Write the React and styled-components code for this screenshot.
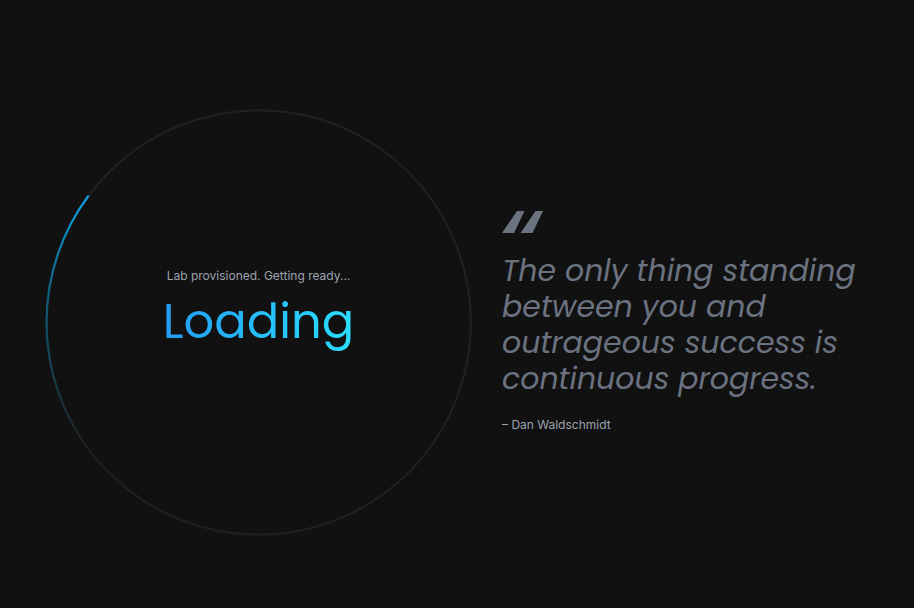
import React from "react";
import styled, { createGlobalStyle } from "styled-components";

const GlobalStyle = createGlobalStyle`
  * { box-sizing: border-box; }
  body {
    margin: 0;
    background: #111111;
    font-family: Inter, "Liberation Sans", sans-serif;
  }
`;

const Page = styled.main`
  display: grid;
  grid-template-columns: minmax(0, 7fr) minmax(0, 6fr);
  align-items: center;
  gap: 30px;
  min-height: 100vh;
  padding: 36px 46px 0 45px;
`;

const Loader = styled.section`
  display: grid;
  place-items: center;
  aspect-ratio: 1;

  > * { grid-area: 1 / 1; }
`;

const Ring = styled.svg`
  display: block;
  width: 100%;
  height: 100%;
  overflow: visible;
`;

const Status = styled.div`
  display: flex;
  flex-direction: column;
  align-items: center;
  padding-bottom: 16px;
`;

const Caption = styled.p`
  margin: 0;
  color: #9ca3af;
  font-size: 12px;
  line-height: 16px;
`;

const Title = styled.h1`
  margin: 0;
  padding: 0 2px;
  font-family: Poppins, Inter, sans-serif;
  font-size: 48px;
  font-weight: 400;
  line-height: 76px;
  color: transparent;
  background: linear-gradient(90deg, #219cf3, #2adfff);
  background-clip: text;
`;

const Quote = styled.figure`
  margin: 0;
`;

const QuoteMark = styled.svg`
  display: block;
  width: 42px;
  height: 22px;
`;

const QuoteText = styled.blockquote`
  margin: 20px 0;
  color: #6b7280;
  font-family: Poppins, Inter, sans-serif;
  font-size: 30px;
  font-style: italic;
  font-weight: 400;
  line-height: 36px;
`;

const Author = styled.figcaption`
  color: #9ca3af;
  font-size: 12px;
  line-height: 16px;
`;

export default function App() {
  return (
    <>
      <GlobalStyle />
      <Page>
        <Loader role="status">
          <Ring viewBox="0 0 426 426" fill="none" aria-hidden="true">
            <defs>
              <linearGradient id="sweep" x1="0" y1="86" x2="0" y2="341" gradientUnits="userSpaceOnUse">
                <stop offset="0" stopColor="#0ea5e9" />
                <stop offset="0.45" stopColor="#0284b5" stopOpacity="0.55" />
                <stop offset="1" stopColor="#0284b5" stopOpacity="0" />
              </linearGradient>
            </defs>
            <circle cx="213.2" cy="213" r="211.6" stroke="#202020" strokeWidth="2.2" />
            <path d="M43.5 86.5A211.6 211.6 0 0 0 43.5 339.5" stroke="url(#sweep)" strokeWidth="2.2" />
          </Ring>
          <Status>
            <Caption>Lab provisioned. Getting ready...</Caption>
            <Title>Loading</Title>
          </Status>
        </Loader>
        <Quote>
          <QuoteMark viewBox="0 0 42 22" fill="#6b7280" aria-hidden="true">
            <path d="M15 0H22.5L12 22H0ZM33.5 0H41L30.5 22H18.5Z" />
          </QuoteMark>
          <QuoteText>
            The only thing standing between you and outrageous success is continuous progress.
          </QuoteText>
          <Author>– Dan Waldschmidt</Author>
        </Quote>
      </Page>
    </>
  );
}
